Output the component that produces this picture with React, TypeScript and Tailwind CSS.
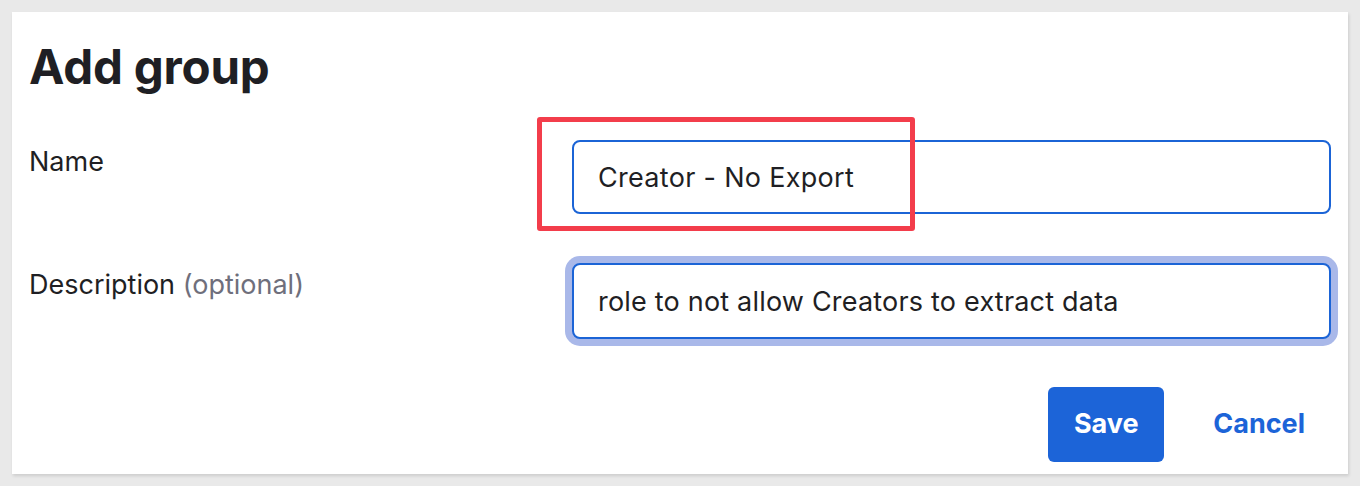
import React from "react";

const font = { fontFamily: "Inter, 'Liberation Sans', sans-serif" };

export default function App() {
  return (
    <div className="min-h-[486px] w-full bg-[#e9e9e9] p-3" style={font}>
      <div className="relative h-[462px] w-full bg-white px-[17px] shadow-[1px_2px_3px_rgba(0,0,0,0.12)]">
        <h1 className="pt-[27px] text-[47.5px] font-bold leading-[56px] tracking-[-0.2px] text-[#1f1f24]">
          Add group
        </h1>

        <div className="mt-[45px] grid grid-cols-[543px_1fr] items-start">
          <label className="pt-[6px] text-[27px] leading-[32px] text-[#1f1f24]">Name</label>
          <input
            readOnly
            defaultValue="Creator - No Export"
            className="h-[74px] w-full rounded-lg border-2 border-[#1b64d6] bg-white px-6 text-[27px] tracking-[0.3px] text-[#1f1f24] outline-none"
          />
        </div>

        <div className="mt-[49px] grid grid-cols-[543px_1fr] items-start">
          <label className="pt-[6px] text-[27px] leading-[32px] text-[#1f1f24]">
            Description <span className="text-[#6f6f7c]">(optional)</span>
          </label>
          <input
            readOnly
            defaultValue="role to not allow Creators to extract data"
            className="h-[76px] w-full rounded-lg border-2 border-[#1b64d6] bg-white px-6 text-[27px] tracking-[0.2px] text-[#1f1f24] outline-none ring-[7px] ring-[#a9b8e9]"
          />
        </div>

        <div className="mt-[48px] flex items-center justify-end gap-[49px] pr-[26px]">
          <button className="h-[75px] w-[116px] rounded-md bg-[#1c64d8] text-[27px] font-bold text-white">
            Save
          </button>
          <button className="text-[27px] font-bold text-[#1c64d8]">Cancel</button>
        </div>

        <div className="absolute left-[525px] top-[105px] h-[114px] w-[378px] rounded-[3px] border-[5px] border-[#f33d4b]" />
      </div>
    </div>
  );
}
